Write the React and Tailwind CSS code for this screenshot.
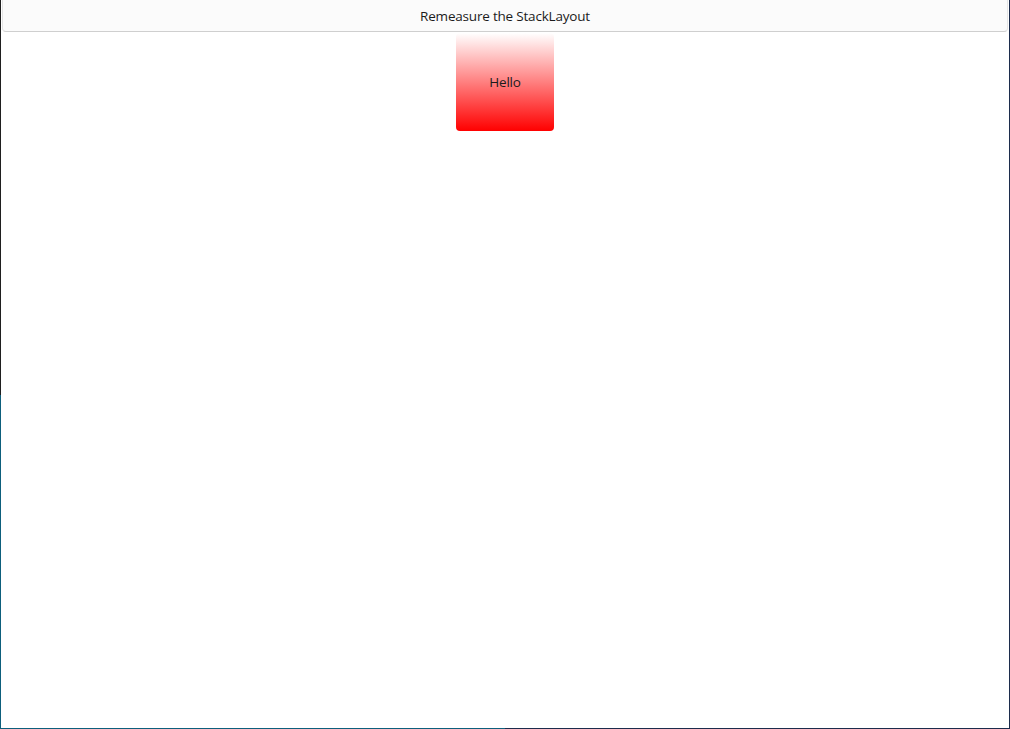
export default function App() {
  return (
    <div className="flex h-[729px] w-[1010px] overflow-hidden font-['Segoe_UI','Open_Sans',sans-serif] text-[#1b1b1b]">
      {/* left window edge */}
      <div className="flex w-px flex-col">
        <div className="h-[395px] bg-[#1f1f1f]" />
        <div className="flex-1 bg-[#0d5f7c]" />
      </div>

      <div className="flex flex-1 flex-col">
        <div className="flex flex-1 flex-col items-center bg-white">
          <button className="mx-px flex h-8 w-[1006px] items-center justify-center rounded-b-[4px] border border-t-0 border-[#e5e5e5] border-b-[#cfcfcf] bg-[#fbfbfb] pt-[2px] text-[13.5px] tracking-[-0.2px]">
            Remeasure the StackLayout
          </button>
          <div className="mt-px flex h-[98px] w-[98px] items-center justify-center rounded-[4px] bg-[linear-gradient(to_bottom,#ffffff,#ff0000)] text-[13.5px] tracking-[-0.2px]">
            Hello
          </div>
        </div>
        <div className="flex h-px">
          <div className="w-1/2 bg-[#0d5f7c]" />
          <div className="w-1/2 bg-[#1c2c4c]" />
        </div>
      </div>

      {/* right window edge */}
      <div className="w-px bg-[#1c2c4c]" />
    </div>
  );
}
